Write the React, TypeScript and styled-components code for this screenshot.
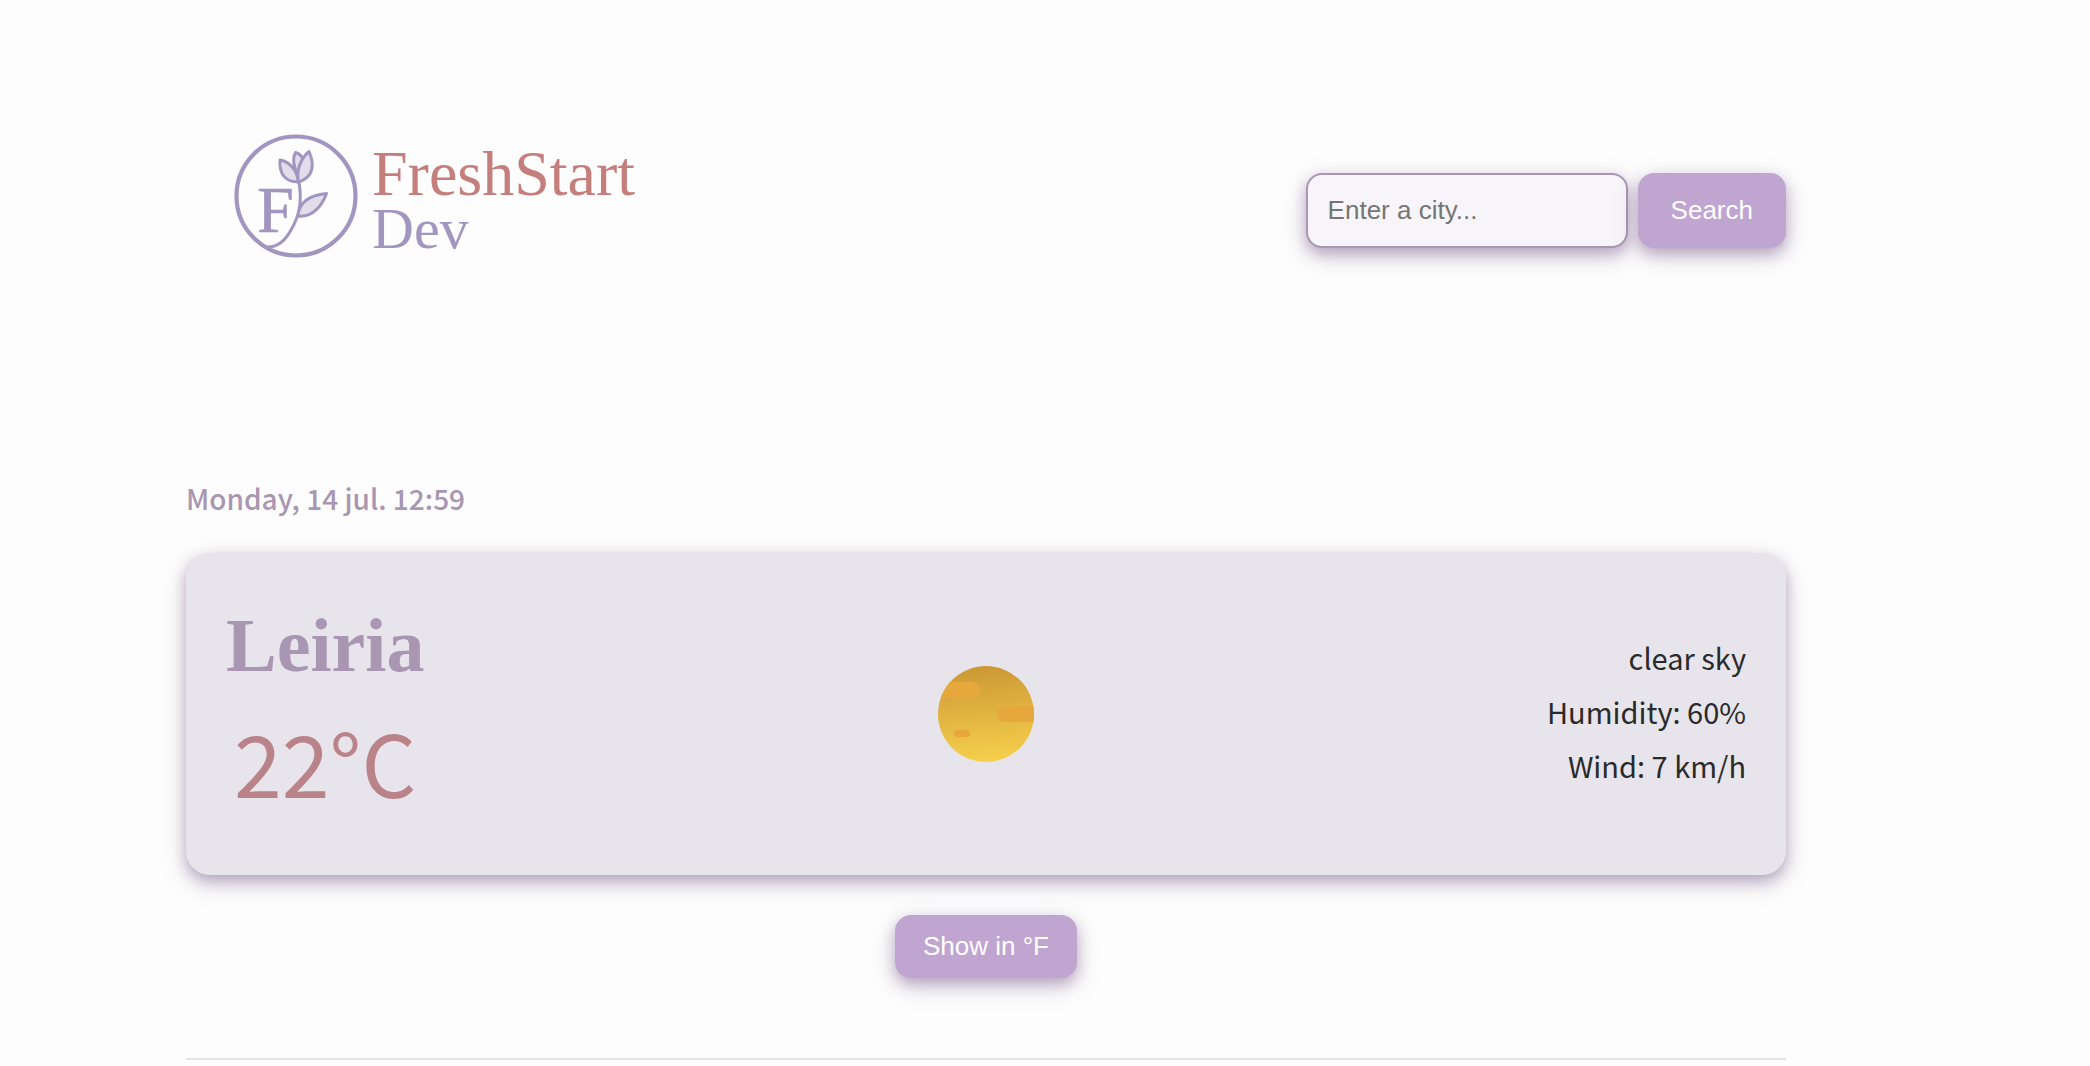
import React, { useState } from "react";
import styled, { createGlobalStyle } from "styled-components";

const mauve = "#a996b2";
const lilac = "#c0a5d0";
const rose = "#b98389";
const sans = `"Noto Sans CJK SC", "Noto Sans", sans-serif`;
const serif = `"Liberation Serif", serif`;
const control = `"Liberation Sans", Arial, sans-serif`;
const shadow = "0 8px 24px rgba(91, 60, 111, 0.22), 0 6px 14px rgba(91, 50, 111, 0.3)";

const GlobalStyle = createGlobalStyle`
  *, *::before, *::after { box-sizing: border-box; }
  body {
    margin: 0;
    background: #fdfdfd;
    color: #2a2a2a;
    font-family: ${sans};
  }
`;

const Page = styled.div`
  max-width: 1904px;
  padding: 132px 118px 0 186px;
`;

const Content = styled.div`
  max-width: 1600px;
`;

const Header = styled.header`
  display: flex;
  align-items: flex-start;
  justify-content: space-between;
`;

const Brand = styled.a`
  display: flex;
  align-items: center;
  gap: 12px;
  padding-left: 46px;
  text-decoration: none;
`;

const Emblem = styled.svg`
  width: 128px;
  height: 128px;
`;

const BrandName = styled.span`
  display: flex;
  flex-direction: column;
  padding-top: 10px;
  font: 400 64px/55px ${serif};
  color: #c47e7c;
`;

const BrandSuffix = styled.span`
  font-size: 58px;
  color: #a196c0;
`;

const SearchForm = styled.form`
  display: flex;
  gap: 10px;
  padding-top: 41px;
`;

const CityInput = styled.input`
  width: 322px;
  height: 75px;
  padding: 0 20px;
  border: 2px solid ${mauve};
  border-radius: 16px;
  background: #f7f5f9;
  box-shadow: ${shadow};
  font: 400 26px/32px ${control};
  color: #2a2a2a;

  &::placeholder {
    color: #757575;
    opacity: 1;
  }
`;

const Button = styled.button<{ $tall?: boolean }>`
  height: ${(p) => (p.$tall ? 75 : 63)}px;
  padding: 0 ${(p) => (p.$tall ? 33 : 28)}px 2px;
  border: 0;
  border-radius: 16px;
  background: ${lilac};
  box-shadow: ${shadow};
  font: 400 26px/32px ${control};
  color: #fff;
  cursor: pointer;
`;

const DateLine = styled.p`
  margin: 214px 0 31px;
  font-size: 28px;
  font-weight: 500;
  line-height: 48px;
  color: ${mauve};
`;

const Card = styled.section`
  display: grid;
  grid-template-columns: 1fr auto 1fr;
  align-items: center;
  min-height: 322px;
  padding: 40px;
  border-radius: 24px;
  background: #e7e4eb;
  box-shadow: ${shadow};
`;

const Place = styled.div`
  justify-self: start;
  padding-bottom: 10px;
  text-align: center;
`;

const City = styled.h1`
  margin: 0;
  font: 700 76px/104px ${serif};
  color: ${mauve};
`;

const Temperature = styled.p`
  margin: 0;
  font-size: 86px;
  line-height: 128px;
  color: ${rose};
`;

const Sun = styled.svg`
  width: 96px;
  height: 96px;
`;

const Details = styled.ul`
  margin: 0;
  padding: 0 0 6px;
  list-style: none;
  justify-self: end;
  text-align: right;
  font-size: 29px;
  line-height: 54px;
`;

const UnitRow = styled.div`
  display: flex;
  justify-content: center;
  padding: 40px 0 80px;
`;

const Divider = styled.hr`
  margin: 0;
  border: 0;
  border-top: 2px solid #e2e2e2;
`;

function Logo() {
  return (
    <Brand href="#">
      <Emblem viewBox="0 0 128 128" fill="none" stroke="#a196c0" strokeLinecap="round" strokeLinejoin="round" aria-hidden="true">
        <circle cx="64" cy="64" r="59.5" strokeWidth="4.2" />
        <text x="25" y="100" fontSize="66" fill="#a196c0" strokeWidth="0.6" fontFamily="Liberation Serif, serif">F</text>
        <g strokeWidth="3">
          <path d="M67 50C70 69 68 83 59 98C53 109 45 116 34 115" />
          <g fill="#e2dceb">
            <path d="M63 36C61 30 61 25 63.500 20.500C67 21.500 69 23 70.500 26L70 44L66 50Z" />
            <path d="M48 28C56 29 65 37 66.500 50C54 50 47 43 48 28Z" />
            <path d="M77 19.500C82 31 83 45 66.500 50C64 40 68 27 77 19.500Z" />
            <path d="M66 84C67 69 80 63 94.500 61.500C90 74 80 86 66 84Z" />
          </g>
        </g>
      </Emblem>
      <BrandName>
        FreshStart
        <BrandSuffix>Dev</BrandSuffix>
      </BrandName>
    </Brand>
  );
}

function SunIcon() {
  return (
    <Sun viewBox="0 0 96 96" role="img" aria-label="clear sky">
      <defs>
        <linearGradient id="sun-fill" x1="0.45" y1="0" x2="0.55" y2="1">
          <stop offset="0" stopColor="#cc9835" />
          <stop offset="1" stopColor="#f6d04c" />
        </linearGradient>
        <clipPath id="sun-disc">
          <circle cx="48" cy="48" r="48" />
        </clipPath>
      </defs>
      <g clipPath="url(#sun-disc)">
        <rect width="96" height="96" fill="url(#sun-fill)" />
        <g fill="#e6a73c">
          <rect x="-20" y="16" width="62" height="16" rx="8" />
          <rect x="59" y="40" width="60" height="16" rx="8" />
          <rect x="16" y="64" width="16" height="7" rx="3.500" />
        </g>
      </g>
    </Sun>
  );
}

export default function App() {
  const [fahrenheit, setFahrenheit] = useState(false);
  return (
    <>
      <GlobalStyle />
      <Page>
        <Content>
          <Header>
            <Logo />
            <SearchForm onSubmit={(e) => e.preventDefault()}>
              <CityInput type="text" placeholder="Enter a city..." aria-label="City" />
              <Button $tall type="submit">Search</Button>
            </SearchForm>
          </Header>
          <main>
            <DateLine>Monday, 14 jul. 12:59</DateLine>
            <Card>
              <Place>
                <City>Leiria</City>
                <Temperature>{fahrenheit ? "72°F" : "22°C"}</Temperature>
              </Place>
              <SunIcon />
              <Details>
                <li>clear sky</li>
                <li>Humidity: 60%</li>
                <li>Wind: 7 km/h</li>
              </Details>
            </Card>
            <UnitRow>
              <Button type="button" onClick={() => setFahrenheit(!fahrenheit)}>
                {fahrenheit ? "Show in °C" : "Show in °F"}
              </Button>
            </UnitRow>
            <Divider />
          </main>
        </Content>
      </Page>
    </>
  );
}
